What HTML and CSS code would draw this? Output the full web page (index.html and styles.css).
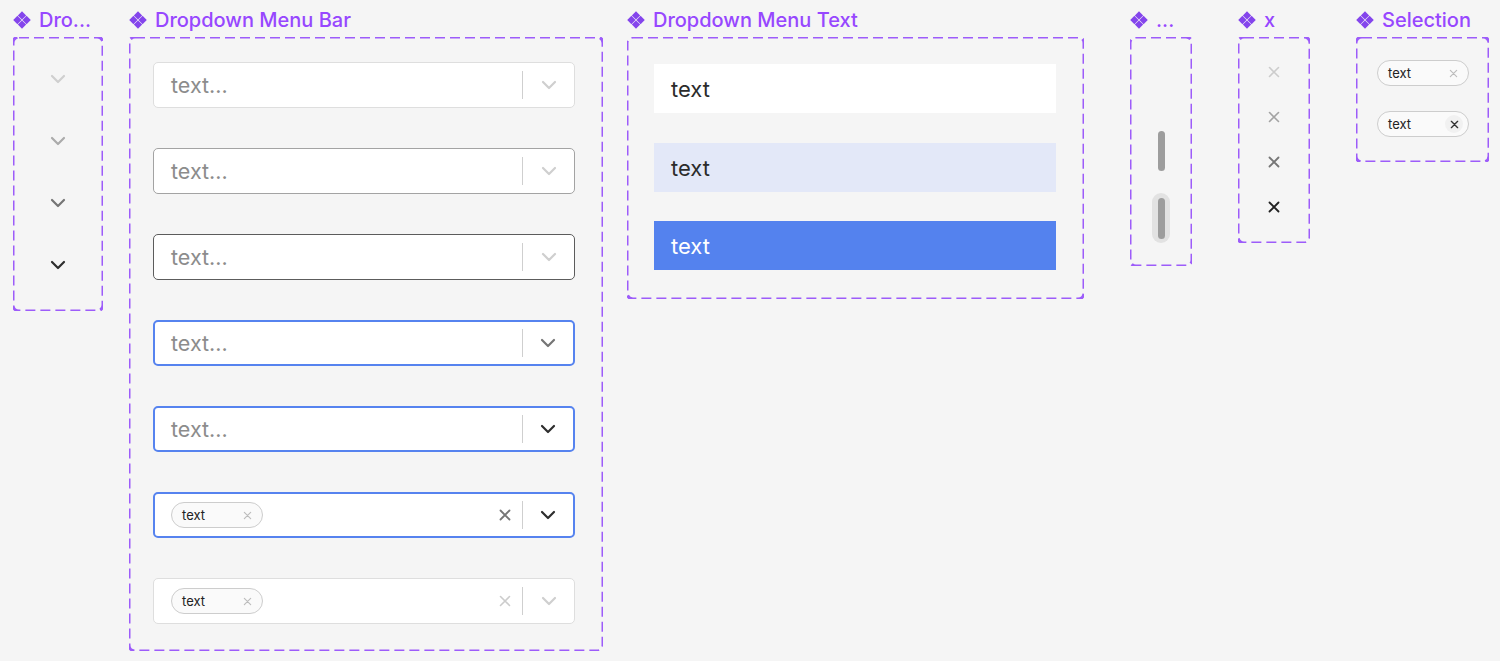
FILE: index.html
```html
<!DOCTYPE html>
<html lang="en">
<head>
<meta charset="utf-8">
<title>Dropdown components</title>
<link rel="stylesheet" href="styles.css">
</head>
<body>
<div class="canvas">

  <!-- Set 1: chevrons -->
  <section class="set set-chev">
    <h2 class="set-title"><svg class="set-icon" viewBox="0 0 16 16"><path d="M8 0.2L11.7 3.9L8 7.6L4.3 3.9Z M3.9 4.3L7.6 8L3.9 11.7L0.2 8Z M12.1 4.3L15.8 8L12.1 11.7L8.4 8Z M8 8.4L11.7 12.1L8 15.8L4.3 12.1Z"/></svg><span>Dro...</span></h2>
    <div class="set-box box-chev">
      <div class="chev-cell"><svg class="chev c-light" viewBox="0 0 16 10"><path d="M2 2L8 8L14 2"/></svg></div>
      <div class="chev-cell"><svg class="chev c-mid" viewBox="0 0 16 10"><path d="M2 2L8 8L14 2"/></svg></div>
      <div class="chev-cell"><svg class="chev c-gray" viewBox="0 0 16 10"><path d="M2 2L8 8L14 2"/></svg></div>
      <div class="chev-cell"><svg class="chev c-dark" viewBox="0 0 16 10"><path d="M2 2L8 8L14 2"/></svg></div>
    </div>
  </section>

  <!-- Set 2: dropdown menu bar -->
  <section class="set set-bar">
    <h2 class="set-title"><svg class="set-icon" viewBox="0 0 16 16"><path d="M8 0.2L11.7 3.9L8 7.6L4.3 3.9Z M3.9 4.3L7.6 8L3.9 11.7L0.2 8Z M12.1 4.3L15.8 8L12.1 11.7L8.4 8Z M8 8.4L11.7 12.1L8 15.8L4.3 12.1Z"/></svg><span>Dropdown Menu Bar</span></h2>
    <div class="set-box box-bar">
      <div class="bar bar-default">
        <span class="bar-text">text...</span>
        <span class="bar-div"></span>
        <span class="bar-arrow"><svg class="chev c-light" viewBox="0 0 16 10"><path d="M2 2L8 8L14 2"/></svg></span>
      </div>
      <div class="bar bar-hover">
        <span class="bar-text">text...</span>
        <span class="bar-div"></span>
        <span class="bar-arrow"><svg class="chev c-light" viewBox="0 0 16 10"><path d="M2 2L8 8L14 2"/></svg></span>
      </div>
      <div class="bar bar-press">
        <span class="bar-text">text...</span>
        <span class="bar-div"></span>
        <span class="bar-arrow"><svg class="chev c-light" viewBox="0 0 16 10"><path d="M2 2L8 8L14 2"/></svg></span>
      </div>
      <div class="bar bar-focus">
        <span class="bar-text">text...</span>
        <span class="bar-div"></span>
        <span class="bar-arrow"><svg class="chev c-gray" viewBox="0 0 16 10"><path d="M2 2L8 8L14 2"/></svg></span>
      </div>
      <div class="bar bar-focus">
        <span class="bar-text">text...</span>
        <span class="bar-div"></span>
        <span class="bar-arrow"><svg class="chev c-dark" viewBox="0 0 16 10"><path d="M2 2L8 8L14 2"/></svg></span>
      </div>
      <div class="bar bar-focus">
        <span class="bar-val"><span class="chip"><span class="chip-text">text</span><svg class="x x-chip" viewBox="0 0 10 10"><path d="M1.5 1.5L8.5 8.5M8.5 1.5L1.5 8.5"/></svg></span></span>
        <span class="bar-clear"><svg class="x x-gray" viewBox="0 0 12 12"><path d="M1.5 1.5L10.5 10.5M10.5 1.5L1.5 10.5"/></svg></span>
        <span class="bar-div"></span>
        <span class="bar-arrow"><svg class="chev c-dark" viewBox="0 0 16 10"><path d="M2 2L8 8L14 2"/></svg></span>
      </div>
      <div class="bar bar-default">
        <span class="bar-val"><span class="chip"><span class="chip-text">text</span><svg class="x x-chip" viewBox="0 0 10 10"><path d="M1.5 1.5L8.5 8.5M8.5 1.5L1.5 8.5"/></svg></span></span>
        <span class="bar-clear"><svg class="x x-light" viewBox="0 0 12 12"><path d="M1.5 1.5L10.5 10.5M10.5 1.5L1.5 10.5"/></svg></span>
        <span class="bar-div"></span>
        <span class="bar-arrow"><svg class="chev c-light" viewBox="0 0 16 10"><path d="M2 2L8 8L14 2"/></svg></span>
      </div>
    </div>
  </section>

  <!-- Set 3: dropdown menu text -->
  <section class="set set-text">
    <h2 class="set-title"><svg class="set-icon" viewBox="0 0 16 16"><path d="M8 0.2L11.7 3.9L8 7.6L4.3 3.9Z M3.9 4.3L7.6 8L3.9 11.7L0.2 8Z M12.1 4.3L15.8 8L12.1 11.7L8.4 8Z M8 8.4L11.7 12.1L8 15.8L4.3 12.1Z"/></svg><span>Dropdown Menu Text</span></h2>
    <div class="set-box box-text">
      <div class="opt opt-default">text</div>
      <div class="opt opt-hover">text</div>
      <div class="opt opt-selected">text</div>
    </div>
  </section>

  <!-- Set 4: scrollbar -->
  <section class="set set-scroll">
    <h2 class="set-title"><svg class="set-icon" viewBox="0 0 16 16"><path d="M8 0.2L11.7 3.9L8 7.6L4.3 3.9Z M3.9 4.3L7.6 8L3.9 11.7L0.2 8Z M12.1 4.3L15.8 8L12.1 11.7L8.4 8Z M8 8.4L11.7 12.1L8 15.8L4.3 12.1Z"/></svg><span>...</span></h2>
    <div class="set-box box-scroll">
      <div class="thumb"></div>
      <div class="track"><div class="thumb thumb-inner"></div></div>
    </div>
  </section>

  <!-- Set 5: x -->
  <section class="set set-x">
    <h2 class="set-title"><svg class="set-icon" viewBox="0 0 16 16"><path d="M8 0.2L11.7 3.9L8 7.6L4.3 3.9Z M3.9 4.3L7.6 8L3.9 11.7L0.2 8Z M12.1 4.3L15.8 8L12.1 11.7L8.4 8Z M8 8.4L11.7 12.1L8 15.8L4.3 12.1Z"/></svg><span>x</span></h2>
    <div class="set-box box-x">
      <div class="x-cell"><svg class="x x-light" viewBox="0 0 12 12"><path d="M1.5 1.5L10.5 10.5M10.5 1.5L1.5 10.5"/></svg></div>
      <div class="x-cell"><svg class="x x-mid" viewBox="0 0 12 12"><path d="M1.5 1.5L10.5 10.5M10.5 1.5L1.5 10.5"/></svg></div>
      <div class="x-cell"><svg class="x x-gray" viewBox="0 0 12 12"><path d="M1.5 1.5L10.5 10.5M10.5 1.5L1.5 10.5"/></svg></div>
      <div class="x-cell"><svg class="x x-dark" viewBox="0 0 12 12"><path d="M1.5 1.5L10.5 10.5M10.5 1.5L1.5 10.5"/></svg></div>
    </div>
  </section>

  <!-- Set 6: selection -->
  <section class="set set-sel">
    <h2 class="set-title"><svg class="set-icon" viewBox="0 0 16 16"><path d="M8 0.2L11.7 3.9L8 7.6L4.3 3.9Z M3.9 4.3L7.6 8L3.9 11.7L0.2 8Z M12.1 4.3L15.8 8L12.1 11.7L8.4 8Z M8 8.4L11.7 12.1L8 15.8L4.3 12.1Z"/></svg><span>Selection</span></h2>
    <div class="set-box box-sel">
      <span class="chip"><span class="chip-text">text</span><svg class="x x-chip" viewBox="0 0 10 10"><path d="M1.5 1.5L8.5 8.5M8.5 1.5L1.5 8.5"/></svg></span>
      <span class="chip"><span class="chip-text">text</span><span class="chip-x-hover"><svg class="x x-chip-dark" viewBox="0 0 10 10"><path d="M1.5 1.5L8.5 8.5M8.5 1.5L1.5 8.5"/></svg></span></span>
    </div>
  </section>

</div>
</body>
</html>
```

FILE: styles.css
```css
* { box-sizing: border-box; }

html, body {
  margin: 0;
  padding: 0;
  background: #f5f5f5;
  font-family: Inter, "Noto Sans", "Liberation Sans", sans-serif;
}

.canvas {
  display: flex;
  align-items: flex-start;
  padding-top: 8px;
  padding-left: 13px;
  width: 1500px;
  height: 661px;
  overflow: hidden;
}

.set { display: flex; flex-direction: column; flex: none; }
.set-bar { margin-left: 26px; }
.set-text { margin-left: 24px; }
.set-scroll { margin-left: 46px; }
.set-x { margin-left: 46px; }
.set-sel { margin-left: 46px; }

.set-title {
  margin: 0 0 5px 0;
  height: 24px;
  display: flex;
  align-items: center;
  gap: 8px;
  font-size: 20px;
  line-height: 24px;
  font-weight: 500;
  color: #9747ff;
  white-space: nowrap;
}
.set-icon { width: 18px; height: 18px; fill: #8445ec; flex: none; margin-left: 0; }

.set-box {
  background-image: url("data:image/svg+xml,%3Csvg xmlns='http://www.w3.org/2000/svg' width='100%25' height='100%25'%3E%3Crect x='0' y='0' width='100%25' height='100%25' rx='6' ry='6' fill='none' stroke='%239D5CFA' stroke-width='3' stroke-dasharray='10 5'/%3E%3C/svg%3E");
  background-repeat: no-repeat;
  display: flex;
  flex-direction: column;
}

/* chevrons */
.chev { width: 16px; height: 10px; fill: none; stroke-width: 2.2; stroke-linecap: round; stroke-linejoin: round; }
.c-light { stroke: #cfcfcf; }
.c-mid { stroke: #ababab; }
.c-gray { stroke: #757575; }
.c-dark { stroke: #2e2e2e; }

.box-chev { width: 90px; height: 274px; padding: 11px 0 15px; }
.chev-cell { height: 62px; display: flex; align-items: center; justify-content: center; }

/* dropdown bars */
.box-bar { width: 474px; height: 614px; padding: 25px 0 0 24px; gap: 40px; }
.bar {
  width: 422px;
  height: 46px;
  background: #ffffff;
  border: 1px solid #dedede;
  border-radius: 5px;
  display: flex;
  align-items: center;
  padding-left: 17px;
}
.bar-hover { border-color: #a3a3a3; }
.bar-press { border-color: #5c5c5c; }
.bar-focus { border: 2px solid #5683ef; padding-left: 16px; }
.bar-text { flex: 1; font-size: 21.5px; color: #8c8c8c; }
.bar-val { flex: 1; display: flex; }
.bar-clear { width: 34px; display: flex; justify-content: center; align-items: center; }
.bar-div { width: 1px; height: 28px; background: #cfcfcf; flex: none; }
.bar-arrow { width: 51px; display: flex; justify-content: center; align-items: center; flex: none; }
.bar-focus .bar-arrow { width: 50px; }

/* x */
.x { fill: none; stroke-linecap: round; }
.x-light { width: 12px; height: 12px; stroke: #cccccc; stroke-width: 1.6; }
.x-mid { width: 12px; height: 12px; stroke: #a3a3a3; stroke-width: 1.6; }
.x-gray { width: 12px; height: 12px; stroke: #767676; stroke-width: 1.8; }
.x-dark { width: 12px; height: 12px; stroke: #222222; stroke-width: 1.8; }
.x-chip { width: 9px; height: 9px; stroke: #bdbdbd; stroke-width: 1.3; }
.x-chip-dark { width: 9px; height: 9px; stroke: #333333; stroke-width: 1.5; }

.chip {
  width: 92px;
  height: 26px;
  border: 1px solid #cdcdcd;
  border-radius: 13px;
  background: #fafafa;
  display: flex;
  align-items: center;
  padding: 0 10px 0 10px;
  flex: none;
}
.chip-text { flex: 1; font-size: 13px; color: #222; }
.chip-x-hover {
  width: 18px; height: 18px; margin-right: -5px;
  border-radius: 50%;
  background: #f1f1f1;
  display: flex; align-items: center; justify-content: center;
}

/* menu text */
.box-text { width: 457px; height: 262px; padding: 27px 0 0 27px; gap: 30px; }
.opt {
  width: 402px;
  height: 49px;
  display: flex;
  align-items: center;
  padding-left: 17px;
  font-size: 22px;
  color: #2b2b2b;
}
.opt-default { background: #ffffff; }
.opt-hover { background: #e3e8f8; }
.opt-selected { background: #5482ee; color: #ffffff; }
.opt + .opt-selected { margin-top: -1px; }

/* scroll */
.box-scroll { width: 62px; height: 229px; padding-top: 94px; align-items: center; gap: 22px; }
.thumb { width: 7px; height: 40px; border-radius: 4px; background: #9d9d9d; }
.track { width: 18px; height: 50px; border-radius: 9px; background: #e2e2e2; display: flex; align-items: center; justify-content: center; }
.thumb-inner { height: 41px; }

/* x set */
.box-x { width: 72px; height: 206px; padding-top: 12px; align-items: stretch; }
.x-cell { height: 45px; display: flex; align-items: center; justify-content: center; }

/* selection */
.box-sel { width: 133px; height: 125px; padding: 23px 0 0 21px; gap: 25px; }
```
